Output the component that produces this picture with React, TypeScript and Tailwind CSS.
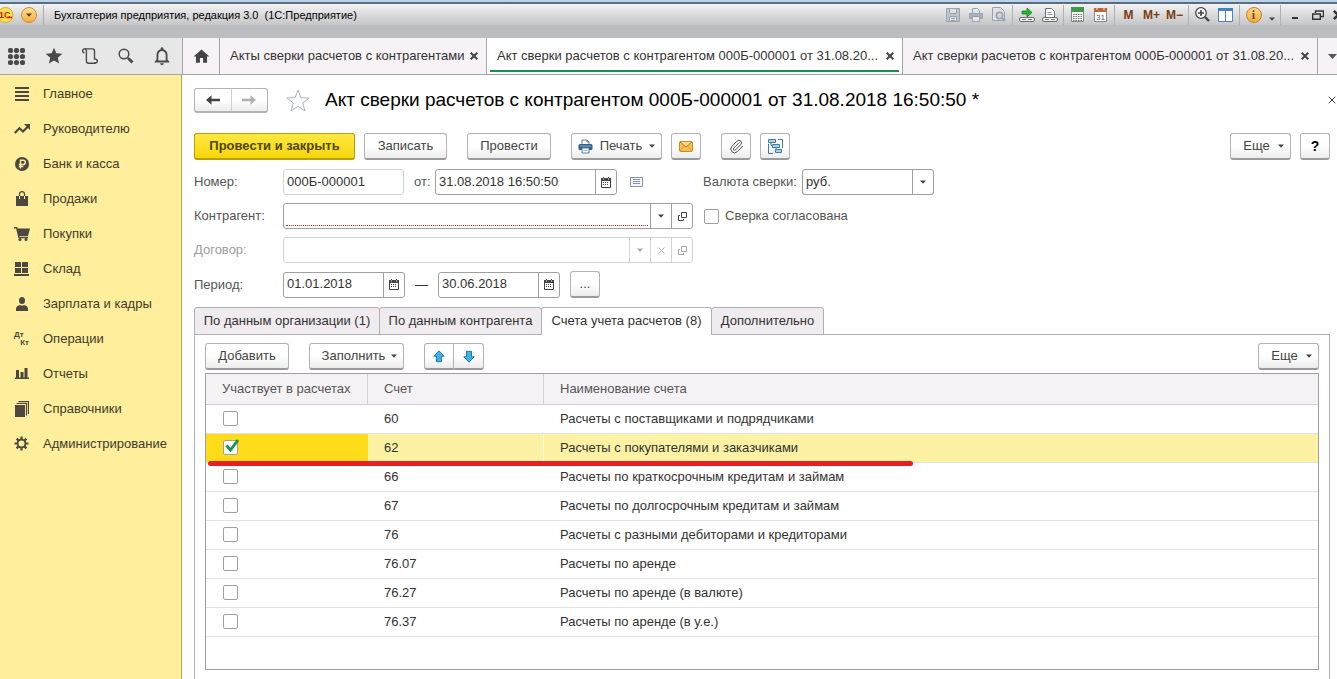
import React, { useState } from 'react'
import { MdHome, MdNotificationsNone, MdStar } from 'react-icons/md'
import { Paperclip } from 'lucide-react'

type Account = { code: string; name: string }

const accounts: Account[] = [
  { code: '60', name: 'Расчеты с поставщиками и подрядчиками' },
  { code: '62', name: 'Расчеты с покупателями и заказчиками' },
  { code: '66', name: 'Расчеты по краткосрочным кредитам и займам' },
  { code: '67', name: 'Расчеты по долгосрочным кредитам и займам' },
  { code: '76', name: 'Расчеты с разными дебиторами и кредиторами' },
  { code: '76.07', name: 'Расчеты по аренде' },
  { code: '76.27', name: 'Расчеты по аренде (в валюте)' },
  { code: '76.37', name: 'Расчеты по аренде (в у.е.)' },
]

/* ---------- icons ---------- */

const Caret: React.FC = () => (
  <svg width="6" height="4" viewBox="0 0 6 4" className="shrink-0">
    <path d="M0 0.5h6L3 3.8z" fill="currentColor" />
  </svg>
)

const Cross: React.FC<{ size?: number; weight?: number }> = ({ size = 8, weight = 2 }) => (
  <svg width={size} height={size} viewBox="0 0 8 8" className="shrink-0">
    <path d="M0.7 0.7l6.6 6.6M7.3 0.7L0.7 7.3" stroke="currentColor" strokeWidth={weight} />
  </svg>
)

const CalendarIcon: React.FC = () => (
  <svg width="10" height="11" viewBox="0 0 10 11">
    <path d="M0.5 1.5h9v9h-9z" fill="none" stroke="#444" />
    <path d="M0 1h10v3H0zM2 0h1v2H2zM7 0h1v2H7z" fill="#444" />
    <path d="M2 5.5h6M2 7.5h6" stroke="#444" strokeDasharray="1 1" />
    <path d="M2.5 1.5v1M7.5 1.5v1" stroke="#fff" />
  </svg>
)

const OpenIcon: React.FC = () => (
  <svg width="9" height="9" viewBox="0 0 9 9" fill="none" stroke="currentColor">
    <path d="M3.5 0.5h5v5h-5z" />
    <path d="M2 3.5H0.5v5h5V7" />
  </svg>
)

const PrinterIcon: React.FC = () => (
  <svg width="15" height="15" viewBox="0 0 15 15">
    <path d="M4 5V1h5l2 2v2" fill="#fff" stroke="#5d7f9e" />
    <path d="M9 1v2h2" fill="none" stroke="#5d7f9e" />
    <rect x="0.5" y="5" width="14" height="6" rx="1.5" fill="#2f5f8a" />
    <path d="M2 7h11" stroke="#8fb4d3" />
    <path d="M4 9h7v5H4z" fill="#fff" stroke="#5d7f9e" />
    <path d="M5.5 11.5h4" stroke="#9db4c8" />
  </svg>
)

const MailIcon: React.FC = () => (
  <svg width="14" height="11" viewBox="0 0 14 11">
    <rect x="0.5" y="0.5" width="13" height="10" rx="1" fill="#f7c052" stroke="#c98a2b" />
    <path d="M1 1l6 5 6-5" fill="#fbd98b" stroke="#b97a24" />
    <path d="M1 10l4.5-5M13 10L8.5 5" stroke="#d69a3a" />
  </svg>
)

const StructureIcon: React.FC = () => (
  <svg width="15" height="15" viewBox="0 0 15 15" stroke="#3e7ca8">
    <path d="M0.5 5v9.5H5M10 0.5h4.5V9" fill="none" />
    <path d="M3 3.5v3h2M8 9v2.5h2" fill="none" />
    <path d="M0.5 0.5h7v3h-7zM4.5 5.5h7v3h-7zM7.5 10.5h6v3h-6z" fill="#a9d3ee" />
  </svg>
)

const BlueArrow: React.FC<{ down?: boolean }> = ({ down }) => (
  <svg width="12" height="13" viewBox="0 0 12 13" className={down ? 'rotate-180' : ''}>
    <path d="M6 0.8l5.2 5.4H8.5v5.5h-5V6.2H0.8z" fill="#40b0ea" stroke="#2277a8" strokeLinejoin="round" />
  </svg>
)

const NavArrow: React.FC<{ forward?: boolean }> = ({ forward }) => (
  <svg width="14" height="10" viewBox="0 0 14 10" className={forward ? 'rotate-180' : ''}>
    <path d="M0 5L5.5 0.2V3.8H14v2.4H5.500v3.600z" fill="currentColor" />
  </svg>
)

const ListIcon: React.FC = () => (
  <svg width="13" height="10" viewBox="0 0 13 10" stroke="#8796a8">
    <path d="M0.5 0.5h12v9h-12z" fill="#f5f9fc" />
    <path d="M3 2.5h7M3 4.5h7M3 6.5h7" />
  </svg>
)

/* ---------- window title bar ---------- */

const LinkGlyph: React.FC<{ children: React.ReactNode }> = ({ children }) => (
  <svg width="16" height="16" viewBox="0 0 16 16">
    {children}
    <rect x="0.5" y="10.5" width="15" height="4" rx="1.5" fill="#eee" stroke="#6b6b6b" />
    <path d="M3 12.5h4M9 12.5h4" stroke="#777" />
  </svg>
)

const Separator: React.FC = () => <span className="mx-0.5 h-5 w-px shrink-0 bg-[#b0b0b0]" />

const TitleButton: React.FC<{ label: string; children: React.ReactNode }> = ({ label, children }) => (
  <button aria-label={label} className="flex h-5 w-[23px] shrink-0 items-center justify-center text-xs font-bold text-[#7a3c14]">
    {children}
  </button>
)

const TitleBar: React.FC = () => (
  <header className="h-[38px] shrink-0 overflow-hidden border-t-2 border-[#b9d3ea] bg-[#bcbdc1]">
    <div className="flex h-[23px] items-center border-t-2 border-[#5d6b7c] bg-linear-to-b from-[#f2f2f2] to-[#c6c6c8]">
      <svg width="14" height="16" viewBox="0 0 14 16" className="shrink-0">
        <circle cx="5.500" cy="8" r="7.500" fill="#fbe04f" stroke="#d8a72a" />
        <text x="-1" y="11" fontSize="9" fontWeight="bold" fill="#d01c10" fontFamily="Liberation Sans">1С</text>
        <path d="M7 10.500h5" stroke="#d01c10" strokeWidth="1.400" />
      </svg>
      <button aria-label="Главное меню" className="ml-[7px] flex size-4 shrink-0 items-center justify-center rounded-full border border-[#c98f35] bg-linear-to-b from-[#ffdf8e] to-[#f5ae42] text-[#5e3d10]">
        <Caret />
      </button>
      <span className="mx-1.5 h-5 w-px shrink-0 bg-[#aaa]" />
      <span className="ml-1 min-w-0 flex-1 truncate whitespace-pre text-[11px] text-black">
        Бухгалтерия предприятия, редакция 3.0  (1С:Предприятие)
      </span>
      <TitleButton label="Сохранить">
        <svg width="14" height="14" viewBox="0 0 14 14" fill="none" stroke="#9aa3ad">
          <path d="M0.5 0.5h13v13H0.5z" fill="#bcc4cc" />
          <path d="M3.5 0.5h7v5h-7zM3.5 8.5h7v5h-7z" fill="#dde1e5" />
          <path d="M5 10.5h4M5 12.5h4" />
        </svg>
      </TitleButton>
      <TitleButton label="Печать">
        <svg width="14" height="14" viewBox="0 0 14 14" stroke="#9aa3ad">
          <path d="M3.5 5V0.5h5l2 2V5" fill="#e4e6e9" />
          <path d="M0.5 5.5h13v5H0.5z" fill="#a9b1ba" />
          <path d="M3.5 8.5h7v5h-7z" fill="#e4e6e9" />
        </svg>
      </TitleButton>
      <TitleButton label="Просмотр">
        <svg width="14" height="15" viewBox="0 0 14 15" stroke="#9aa3ad">
          <path d="M0.5 0.5h8l4 4v9h-12z" fill="#dfe2e5" />
          <circle cx="7.5" cy="8.5" r="3.2" fill="#cfd5da" strokeWidth="1.6" />
          <path d="M10 11l3 3" strokeWidth="2" />
        </svg>
      </TitleButton>
      <Separator />
      <TitleButton label="Получить ссылку">
        <LinkGlyph>
          <path d="M3 4h5V1l5 4.500-5 4.500V7H3z" fill="#2eb135" stroke="#16801c" strokeWidth="0.8" />
        </LinkGlyph>
      </TitleButton>
      <TitleButton label="Перейти по ссылке">
        <LinkGlyph>
          <path d="M3.500 10V1.500h6l3 3V10" fill="#fff" stroke="#66707a" />
          <path d="M5.500 5.500h4M5.500 7.500h5" stroke="#8a949e" />
        </LinkGlyph>
      </TitleButton>
      <Separator />
      <TitleButton label="Калькулятор">
        <svg width="13" height="15" viewBox="0 0 13 15">
          <path d="M0.5 0.5h12v14H0.5z" fill="#f5f5f5" stroke="#888" />
          <path d="M0 0h13v5H0z" fill="#3f9a4a" />
          <path d="M2 7.5h9M2 9.500h9M2 11.500h9M2 13.500h9" stroke="#777" strokeDasharray="1.500 1" />
        </svg>
      </TitleButton>
      <TitleButton label="Календарь">
        <svg width="13" height="15" viewBox="0 0 13 15">
          <path d="M0.5 1.500h12v13H0.5z" fill="#fff" stroke="#888" />
          <path d="M0 1h13v4H0z" fill="#b8683a" />
          <path d="M3 0v3M10 0v3" stroke="#f3e2d6" />
          <text x="2" y="12.500" fontSize="8" fontWeight="normal" fill="#4a5b70" fontFamily="Liberation Sans">31</text>
        </svg>
      </TitleButton>
      <Separator />
      <TitleButton label="Память">M</TitleButton>
      <TitleButton label="Память плюс">M+</TitleButton>
      <TitleButton label="Память минус">M−</TitleButton>
      <Separator />
      <TitleButton label="Масштаб">
        <svg width="15" height="15" viewBox="0 0 15 15" fill="none" stroke="#444">
          <circle cx="6" cy="6" r="5.300" fill="#fff" strokeWidth="1.300" />
          <path d="M3 6h6M6 3v6" strokeWidth="1.600" />
          <path d="M10 10l4 4" strokeWidth="2.400" />
        </svg>
      </TitleButton>
      <TitleButton label="Панели">
        <svg width="15" height="14" viewBox="0 0 15 14">
          <path d="M0.5 0.5h14v13H0.5z" fill="#fff" stroke="#4f81b4" />
          <path d="M0 0h15v3H0z" fill="#3d84c8" />
          <path d="M7.500 2v12" stroke="#4f81b4" />
        </svg>
      </TitleButton>
      <Separator />
      <TitleButton label="О программе">
        <span className="flex size-4 items-center justify-center rounded-full border border-[#b98531] bg-linear-to-b from-[#ffd98a] to-[#f2a93b] font-['Liberation_Serif',serif] text-xs text-[#6b4a1c]">
          i
        </span>
      </TitleButton>
      <button aria-label="Еще" className="flex h-5 w-[13px] shrink-0 items-end justify-center pb-1 text-[#444]">
        <Caret />
      </button>
      <Separator />
      <TitleButton label="Свернуть">
        <svg width="8" height="8" viewBox="0 0 8 8"><path d="M1 7h6" stroke="#333" strokeWidth="2" /></svg>
      </TitleButton>
      <TitleButton label="Восстановить">
        <svg width="12" height="10" viewBox="0 0 12 10" fill="none" stroke="#333">
          <path d="M3.500 3V1h8v5.500H9" strokeWidth="1.400" />
          <path d="M0.700 4h7.600v5.300H0.700z" strokeWidth="1.400" />
        </svg>
      </TitleButton>
      <button aria-label="Закрыть окно" className="flex h-5 w-2 shrink-0 items-center overflow-hidden pl-1 text-[#333]">
        <Cross size={10} />
      </button>
    </div>
  </header>
)

/* ---------- open windows strip ---------- */

const ToolButton: React.FC<{ label: string; children: React.ReactNode }> = ({ label, children }) => (
  <button aria-label={label} className="flex h-full flex-1 items-center justify-center text-[#4a4a4a]">
    {children}
  </button>
)

const WindowTab: React.FC<{ title: string; active?: boolean; width: string }> = ({ title, active, width }) => (
  <div className={`relative flex shrink items-center border-r border-[#a5a5a5] pr-2 pl-2.5 ${width} ${active ? 'bg-white' : 'bg-[#f6f2f6]'}`}>
    <a href="#" className="min-w-0 flex-1 truncate text-[#333]">{title}</a>
    <button aria-label={`Закрыть: ${title}`} className="ml-1 text-[#444]">
      <Cross />
    </button>
    {active && <span className="absolute inset-x-[3px] bottom-[2px] h-0.5 bg-[#179050]" />}
  </div>
)

const WindowStrip: React.FC = () => (
  <div className="flex h-[37px] shrink-0 overflow-hidden border-b border-[#a5a5a5] bg-[#f6f2f6]">
    <div className="flex w-[183px] shrink-0 border-r border-[#a5a5a5] bg-[#e7e7e7] pr-0.5">
      <ToolButton label="Разделы">
        <svg width="17" height="17" viewBox="0 0 17 17" fill="currentColor" className="mr-1">
          {[2.5, 8.5, 14.5].map((y) => [2.5, 8.5, 14.5].map((x) => <circle key={`${x}-${y}`} cx={x} cy={y} r="2.6" />))}
        </svg>
      </ToolButton>
      <ToolButton label="Избранное"><MdStar size={20} /></ToolButton>
      <ToolButton label="История">
        <svg width="17" height="16" viewBox="0 0 17 16" fill="none" stroke="currentColor" strokeWidth="1.400">
          <path d="M2.500 4.700a1.900 1.900 0 1 1 1.900-1.900v10.200c0 1.200.8 2.200 2.100 2.200h7.300" />
          <path d="M2.500 0.900h8c1.300 0 2 .8 2 2v8.500" />
          <path d="M12.500 11.400a1.900 1.900 0 1 1-.3 3.200" />
        </svg>
      </ToolButton>
      <ToolButton label="Поиск">
        <svg width="16" height="16" viewBox="0 0 16 16" fill="none" stroke="currentColor">
          <circle cx="6" cy="6" r="4.800" strokeWidth="1.500" />
          <path d="M9.500 9.500l1.500 1.500" strokeWidth="1.500" />
          <path d="M10.500 10.500l4 4" strokeWidth="3" />
        </svg>
      </ToolButton>
      <ToolButton label="Уведомления"><MdNotificationsNone size={22} /></ToolButton>
    </div>
    <button aria-label="Начальная страница" className="flex w-[37px] shrink-0 items-center justify-center border-r border-[#a5a5a5] text-[#444]">
      <MdHome size={19} />
    </button>
    <WindowTab title="Акты сверки расчетов с контрагентами" width="w-[267px]" />
    <WindowTab title="Акт сверки расчетов с контрагентом 000Б-000001 от 31.08.20..." width="w-[416px]" active />
    <WindowTab title="Акт сверки расчетов с контрагентом 000Б-000001 от 31.08.20..." width="w-[415px]" />
    <button aria-label="Все окна" className="flex min-w-[19px] flex-1 items-center pl-2.5 text-[#555]">
      <svg width="9" height="5" viewBox="0 0 9 5" className="shrink-0"><path d="M0 0h9L4.500 5z" fill="currentColor" /></svg>
    </button>
  </div>
)

/* ---------- sections ---------- */

const sections: { title: string; icon: React.ReactNode }[] = [
  {
    title: 'Главное',
    icon: (
      <svg width="14" height="14" viewBox="0 0 14 14" stroke="currentColor" strokeWidth="2">
        <path d="M0 1h14M0 5h14M0 9h14M0 13h14" />
      </svg>
    ),
  },
  {
    title: 'Руководителю',
    icon: (
      <svg width="16" height="10" viewBox="0 0 16 10">
        <path d="M0.800 9l4.700-4.700 3.500 3.200 5-5" fill="none" stroke="currentColor" strokeWidth="2.200" />
        <path d="M10 0h6v6z" fill="currentColor" />
      </svg>
    ),
  },
  {
    title: 'Банк и касса',
    icon: (
      <svg width="14" height="14" viewBox="0 0 14 14">
        <circle cx="7" cy="7" r="7" fill="currentColor" />
        <path d="M5.500 11.500V3.200h2.700a2.100 2.100 0 0 1 0 4.300H3.800M3.800 9.500h4.500" fill="none" stroke="#ffee9b" strokeWidth="1.400" />
      </svg>
    ),
  },
  {
    title: 'Продажи',
    icon: (
      <svg width="12" height="15" viewBox="0 0 12 15">
        <path d="M0 5h12v10H0z" fill="currentColor" />
        <path d="M3.500 8V3.200a2.500 2.500 0 0 1 5 0V8" fill="none" stroke="currentColor" strokeWidth="1.200" />
        <path d="M3.500 5v3M8.500 5v3" stroke="#ffee9b" />
      </svg>
    ),
  },
  {
    title: 'Покупки',
    icon: (
      <svg width="16" height="14" viewBox="0 0 16 14">
        <path d="M3 1.500h13L14 9H4.500z" fill="currentColor" />
        <path d="M0 0.700h2.600L5 10.500h9" fill="none" stroke="currentColor" strokeWidth="1.400" />
        <circle cx="6" cy="12.500" r="1.500" fill="currentColor" />
        <circle cx="12" cy="12.500" r="1.500" fill="currentColor" />
      </svg>
    ),
  },
  {
    title: 'Склад',
    icon: (
      <svg width="15" height="14" viewBox="0 0 15 14" fill="currentColor">
        <path d="M1 0h6v5H1zM8 0h6v5H8zM1 6h6v5H1zM8 6h6v5H8zM0 12h15v2H0z" />
      </svg>
    ),
  },
  {
    title: 'Зарплата и кадры',
    icon: (
      <svg width="12" height="14" viewBox="0 0 12 14" fill="currentColor">
        <ellipse cx="6" cy="3.500" rx="3" ry="3.500" />
        <path d="M0 14v-2.500C0 9.500 2 8.500 4 8c1 .8 3 .8 4 0 2 .5 4 1.500 4 3.500V14z" />
      </svg>
    ),
  },
  {
    title: 'Операции',
    icon: (
      <span className="flex w-[15px] flex-col text-[8px] leading-2 font-bold">
        <span>Дт</span>
        <span className="text-right">Кт</span>
      </span>
    ),
  },
  {
    title: 'Отчеты',
    icon: (
      <svg width="14" height="11" viewBox="0 0 14 11" fill="currentColor">
        <path d="M0 9.500h14V11H0zM1 2h3v8H1zM5.500 4h3v6h-3zM9.500 0h3v10h-3z" />
      </svg>
    ),
  },
  {
    title: 'Справочники',
    icon: (
      <svg width="14" height="16" viewBox="0 0 14 16">
        <path d="M0 4h10v12H0z" fill="currentColor" />
        <path d="M1.500 2.500h10V14.500M3.500 0.700h10V13" fill="none" stroke="currentColor" strokeWidth="1.200" />
      </svg>
    ),
  },
  {
    title: 'Администрирование',
    icon: (
      <svg width="15" height="15" viewBox="0 0 15 15" fill="none" stroke="currentColor">
        <circle cx="7.500" cy="7.500" r="3.900" strokeWidth="1.800" />
        <path d="M7.500 0.500v3M7.500 11.500v3M0.500 7.500h3M11.500 7.500h3M2.600 2.600l2 2M10.400 10.400l2 2M2.600 12.400l2-2M10.400 4.600l2-2" strokeWidth="2.200" />
      </svg>
    ),
  },
]

const Sidebar: React.FC = () => (
  <nav className="w-[182px] shrink-0 border-r border-[#b5aa45] bg-[#ffee9b] pt-px">
    {sections.map((s) => (
      <a key={s.title} href="#" className="flex h-[35px] items-center text-[#3f3b2a]">
        <span className="flex w-[43px] shrink-0 items-center justify-center text-[#4a4841]">{s.icon}</span>
        {s.title}
      </a>
    ))}
  </nav>
)

/* ---------- form controls ---------- */

const buttonLook =
  'flex h-[27px] shrink-0 items-center justify-center rounded-[3px] border border-[#b3b3b3] border-b-2 border-b-[#9b9b9b] bg-linear-to-b from-white from-50% to-[#ececec] text-[#444]'

const Button: React.FC<{ className?: string; label?: string; children: React.ReactNode }> = ({ className = '', label, children }) => (
  <button aria-label={label} className={`${buttonLook} ${className}`}>
    {children}
  </button>
)

const FieldBox: React.FC<{ className?: string; muted?: boolean; children: React.ReactNode }> = ({ className = '', muted, children }) => (
  <div className={`flex h-[26px] rounded-[3px] border ${muted ? 'border-[#d2d2d2] text-[#a5a5a5]' : 'border-[#a0a0a0] text-[#444]'} ${className}`}>
    {children}
  </div>
)

const FieldButton: React.FC<{ label: string; muted?: boolean; children: React.ReactNode }> = ({ label, muted, children }) => (
  <button
    aria-label={label}
    disabled={muted}
    className={`flex w-[21px] shrink-0 items-center justify-center border-l ${muted ? 'border-[#d2d2d2]' : 'border-[#a0a0a0]'}`}
  >
    {children}
  </button>
)

const inputLook = 'min-w-0 flex-1 bg-transparent px-[3px] pb-px text-[#333] outline-none'

const Checkbox: React.FC<{ id: string; label?: string; checked: boolean; onChange: () => void }> = ({ id, label, checked, onChange }) => (
  <span className="relative flex size-[15px] shrink-0">
    <input
      id={id}
      type="checkbox"
      aria-label={label}
      checked={checked}
      onChange={onChange}
      className="size-[15px] appearance-none rounded-[2px] border border-[#a0a0a0] bg-white"
    />
    {checked && (
      <svg width="14" height="14" viewBox="0 0 14 14" className="pointer-events-none absolute -top-px left-0.5">
        <path d="M1.500 6.500l4 4.500L13 1" fill="none" stroke="#12964c" strokeWidth="2.800" />
      </svg>
    )}
  </span>
)

const DocumentForm: React.FC = () => {
  const [agreed, setAgreed] = useState(false)

  return (
    <div className="flex flex-col gap-2 pt-[9px] text-[#555]">
      <div className="flex items-center">
        <label htmlFor="number" className="w-[89px] shrink-0">Номер:</label>
        <FieldBox muted className="w-[121px]">
          <input id="number" defaultValue="000Б-000001" className={inputLook} />
        </FieldBox>
        <label htmlFor="date" className="w-[31px] pl-2.5">от:</label>
        <FieldBox className="w-[182px]">
          <input id="date" defaultValue="31.08.2018 16:50:50" className={inputLook} />
          <FieldButton label="Выбрать дату"><CalendarIcon /></FieldButton>
        </FieldBox>
        <button aria-label="Список" className="mr-[60px] ml-[13px]"><ListIcon /></button>
        <label htmlFor="currency" className="w-[99px] shrink-0">Валюта сверки:</label>
        <FieldBox className="w-[132px]">
          <select id="currency" className={`${inputLook} appearance-none`}>
            <option>руб.</option>
          </select>
          <FieldButton label="Выбрать валюту"><Caret /></FieldButton>
        </FieldBox>
      </div>

      <div className="flex items-center">
        <label htmlFor="partner" className="w-[89px] shrink-0">Контрагент:</label>
        <FieldBox className="w-[410px]">
          <span className="flex flex-1 px-0.5 pb-0.5">
            <input id="partner" className="w-full border-b border-dotted border-[#c0392b] bg-transparent outline-none" />
          </span>
          <FieldButton label="Выбрать контрагента"><Caret /></FieldButton>
          <FieldButton label="Открыть контрагента"><OpenIcon /></FieldButton>
        </FieldBox>
        <label htmlFor="agreed" className="ml-[11px] flex items-center gap-1.5">
          <Checkbox id="agreed" checked={agreed} onChange={() => setAgreed(!agreed)} />
          Сверка согласована
        </label>
      </div>

      <div className="flex items-center">
        <label htmlFor="contract" className="w-[89px] shrink-0 text-[#9c9c9c]">Договор:</label>
        <FieldBox muted className="w-[410px]">
          <input id="contract" disabled className={inputLook} />
          <FieldButton muted label="Выбрать договор"><Caret /></FieldButton>
          <FieldButton muted label="Очистить договор"><Cross size={7} weight={1} /></FieldButton>
          <FieldButton muted label="Открыть договор"><OpenIcon /></FieldButton>
        </FieldBox>
      </div>

      <div className="flex items-center">
        <label htmlFor="from" className="w-[89px] shrink-0">Период:</label>
        <FieldBox className="w-[122px]">
          <input id="from" defaultValue="01.01.2018" className={inputLook} />
          <FieldButton label="Начало периода"><CalendarIcon /></FieldButton>
        </FieldBox>
        <label htmlFor="to" className="w-[33px] text-center text-[#333]">—</label>
        <FieldBox className="w-[122px]">
          <input id="to" defaultValue="30.06.2018" className={inputLook} />
          <FieldButton label="Конец периода"><CalendarIcon /></FieldButton>
        </FieldBox>
        <Button className="ml-2.5 w-[30px]" label="Выбрать период">...</Button>
      </div>
    </div>
  )
}

/* ---------- tabs and table ---------- */

const pageTabs = [
  { title: 'По данным организации (1)', width: 'w-[186px]' },
  { title: 'По данным контрагента', width: 'w-[163px]' },
  { title: 'Счета учета расчетов (8)', width: 'w-[171px]' },
  { title: 'Дополнительно', width: 'w-[113px]' },
]

const PageTabs: React.FC = () => (
  <div role="tablist" className="relative z-10 mt-[9px] -mb-px flex">
    {pageTabs.map((t, i) => (
      <button
        key={t.title}
        role="tab"
        aria-selected={i === 2}
        className={`-mr-px h-7 rounded-t-[3px] border border-[#b0b0b0] text-center whitespace-nowrap text-[#333] ${t.width} ${
          i === 2 ? 'border-b-white bg-white' : 'bg-[#efebef]'
        }`}
      >
        {t.title}
      </button>
    ))}
  </div>
)

const AccountsTable: React.FC = () => {
  const [checked, setChecked] = useState<string[]>(['62'])
  const current = '62'

  const toggle = (code: string) =>
    setChecked(checked.includes(code) ? checked.filter((c) => c !== code) : [...checked, code])

  return (
    <div className="mt-[3px] flex-1 border border-[#a0a0a0] bg-white">
      <table className="w-full table-fixed border-separate border-spacing-0 text-left">
        <thead>
          <tr className="h-[31px] bg-[#f5f2f5] text-[#555]">
            <th className="w-[162px] border-r border-b border-[#d0d0d0] pl-4 font-normal whitespace-nowrap">Участвует в расчетах</th>
            <th className="w-[176px] border-r border-b border-[#d0d0d0] pl-4 font-normal">Счет</th>
            <th className="border-b border-[#d0d0d0] pl-4 font-normal">Наименование счета</th>
          </tr>
        </thead>
        <tbody>
          {accounts.map((a) => {
            const selected = a.code === current
            return (
              <tr key={a.code} className={`h-[29px] text-[#333] ${selected ? 'bg-[#fdf2a3]' : ''}`}>
                <td className={`relative border-b border-[#e2e2e2] pb-0.5 pl-[17px] ${selected ? 'bg-[#ffdc19]' : ''}`}>
                  <Checkbox id={`acc-${a.code}`} label={a.name} checked={checked.includes(a.code)} onChange={() => toggle(a.code)} />
                  {selected && <span className="absolute -bottom-1 left-0.5 z-10 h-[5px] w-[705px] rounded-full bg-[#ea1c24]" />}
                </td>
                <td className={`border-b border-[#e2e2e2] pl-4 ${selected ? 'border-r border-r-[#fffbe0]' : ''}`}>{a.code}</td>
                <td className="border-b border-[#e2e2e2] pl-4">{a.name}</td>
              </tr>
            )
          })}
        </tbody>
      </table>
    </div>
  )
}

const App: React.FC = () => {
  return (
    <div className="flex h-screen flex-col overflow-hidden bg-white font-['Liberation_Sans',Arial,sans-serif] text-[13px] leading-4">
      <TitleBar />
      <WindowStrip />
      <div className="flex min-h-0 flex-1">
        <Sidebar />
        <main className="flex min-w-0 flex-1 flex-col pt-3 pr-[7px] pl-3">
          <div className="flex h-[26px] shrink-0 items-center">
            <div className="flex h-[25px] w-[74px] shrink-0 rounded-[3px] border border-b-2 border-[#b3b3b3] bg-linear-to-b from-white from-50% to-[#ececec]">
              <button aria-label="Назад" className="flex flex-1 items-center justify-center border-r border-[#d0d0d0] text-[#444]">
                <NavArrow />
              </button>
              <button aria-label="Вперед" className="flex flex-1 items-center justify-center text-[#b0b0b0]">
                <NavArrow forward />
              </button>
            </div>
            <button aria-label="В избранное" className="ml-[18px] shrink-0">
              <svg width="24" height="23" viewBox="0 0 24 23">
                <path d="M12 1l2.900 7.700 8.300.3-6.500 5.100 2.300 7.900-7-4.600-7 4.600 2.300-7.900L0.800 9l8.300-.3z" fill="#fff" stroke="#b0b4b8" />
              </svg>
            </button>
            <h1 className="ml-[15px] flex-1 truncate text-[19px] leading-6 text-black">
              Акт сверки расчетов с контрагентом 000Б-000001 от 31.08.2018 16:50:50 *
            </h1>
            <button aria-label="Закрыть" className="-mr-1.5 text-[#444]"><Cross size={8} weight={1} /></button>
          </div>

          <div className="mt-5 flex shrink-0">
            <button className="h-[27px] w-[161px] shrink-0 rounded-[3px] border border-b-2 border-[#b7a000] bg-linear-to-b from-[#ffe93d] to-[#f7d600] font-bold text-[#4f4600]">
              Провести и закрыть
            </button>
            <Button className="ml-[9px] w-[83px]">Записать</Button>
            <Button className="ml-5 w-[84px]">Провести</Button>
            <Button className="ml-5 w-[91px] gap-[7px]">
              <PrinterIcon />
              Печать
              <Caret />
            </Button>
            <Button className="ml-[9px] w-[30px]" label="Отправить по почте"><MailIcon /></Button>
            <Button className="ml-5 w-[30px]" label="Файлы"><Paperclip size={15} strokeWidth={1.5} /></Button>
            <Button className="ml-[9px] w-[30px]" label="Структура подчиненности"><StructureIcon /></Button>
            <span className="flex-1" />
            <Button className="w-[61px] gap-2 pl-1.5">Еще<Caret /></Button>
            <Button className="ml-[9px] w-[30px]" label="Справка"><b className="text-sm text-black">?</b></Button>
          </div>

          <DocumentForm />

          <PageTabs />
          <section className="flex flex-1 flex-col border-x border-t border-[#b0b0b0] px-2.5 pt-2 pb-[9px]">
            <div className="flex shrink-0">
              <Button className="w-[84px]">Добавить</Button>
              <Button className="ml-5 w-[95px] gap-1.5 pl-1.5">Заполнить<Caret /></Button>
              <div className="ml-5 flex">
                <Button className="w-[30px] rounded-r-none" label="Вверх"><BlueArrow /></Button>
                <Button className="-ml-px w-[31px] rounded-l-none" label="Вниз"><BlueArrow down /></Button>
              </div>
              <span className="flex-1" />
              <Button className="w-[61px] gap-2 pl-1.5">Еще<Caret /></Button>
            </div>
            <AccountsTable />
          </section>
        </main>
      </div>
    </div>
  )
}

export default App
